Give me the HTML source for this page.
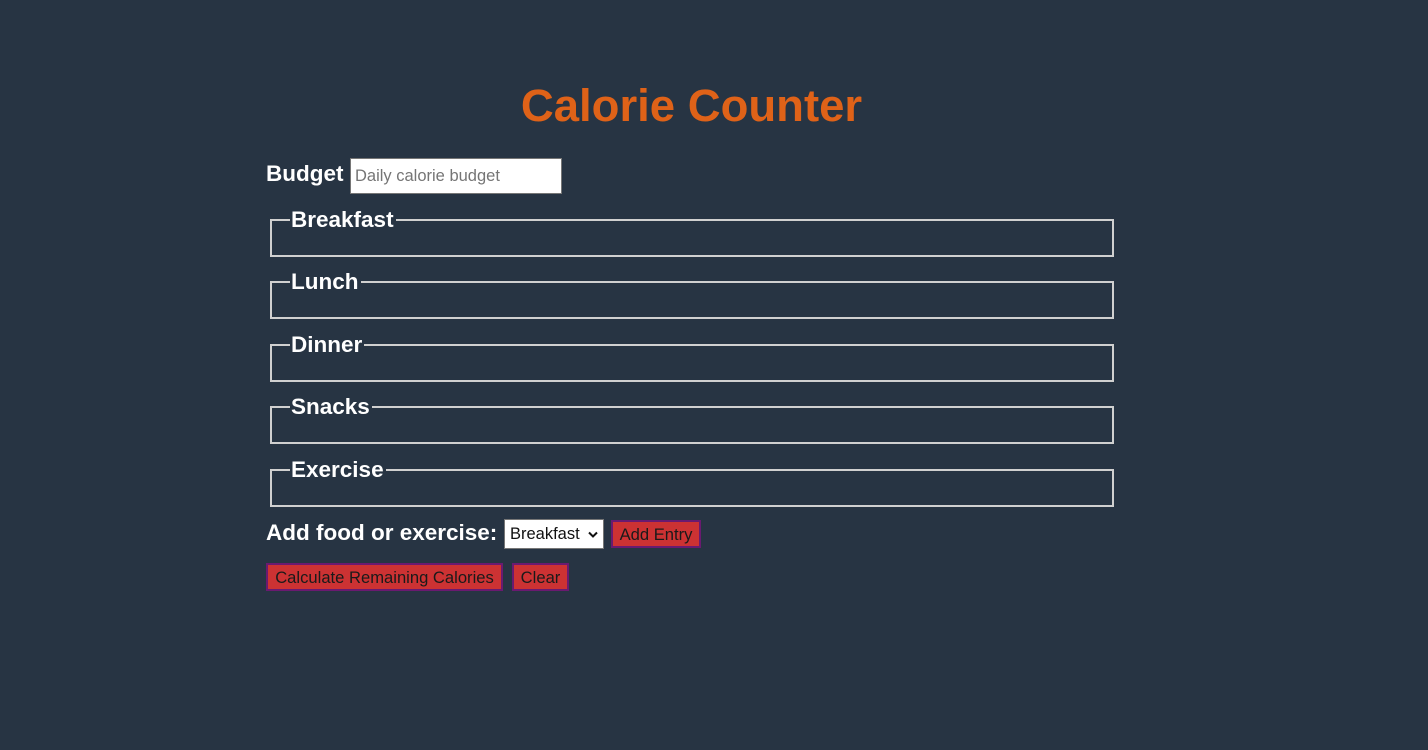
<!DOCTYPE html>
<html><head><style>
body{margin:0;width:1428px;height:750px;background:#273443;font-family:"Liberation Sans",Arial,sans-serif;color:#fff;position:relative;overflow:hidden}
.a{position:absolute}
h1{position:absolute;margin:0;left:0;width:1383px;text-align:center;top:80px;font-size:45.5px;color:#df6218;font-weight:bold;line-height:52px}
.lbl{font-size:22.5px;font-weight:bold;line-height:26px}
.fs{position:absolute;left:270px;width:840px;height:34px;border:2px solid #d0d0d0;box-sizing:content-box}
.fs span{position:absolute;left:18px;top:-14px;background:#273443;padding:0 2px 0 1px;font-size:22.5px;font-weight:bold;line-height:26px}
.btn{position:absolute;background:#cc3233;border:2px solid #6a1a70;color:#1a1a1a;font-size:16.6px;line-height:25px;box-sizing:border-box;text-align:center;height:28px;white-space:nowrap}
</style></head><body>
<h1>Calorie Counter</h1>
<div class="a lbl" style="left:266px;top:161px">Budget</div>
<div class="a" style="left:350px;top:158px;width:212px;height:36px;background:#fff;border:1px solid #767676;box-sizing:border-box;color:#757575;font-size:16.5px;line-height:34px;padding-left:4px">Daily calorie budget</div>
<div class="fs" style="top:219px"><span>Breakfast</span></div>
<div class="fs" style="top:281px"><span>Lunch</span></div>
<div class="fs" style="top:344px"><span>Dinner</span></div>
<div class="fs" style="top:406px"><span>Snacks</span></div>
<div class="fs" style="top:469px"><span>Exercise</span></div>
<div class="a lbl" style="left:266px;top:520px">Add food or exercise:</div>
<div class="a" style="left:504px;top:519px;width:100px;height:30px;background:#fff;border:1px solid #767676;box-sizing:border-box;color:#111;font-size:16.5px;line-height:28px;padding-left:5px">Breakfast<svg style="position:absolute;right:5px;top:11px" width="10" height="7" viewBox="0 0 10 7"><path d="M1 1.5L5 5.5L9 1.5" fill="none" stroke="#111" stroke-width="2"/></svg></div>
<div class="btn" style="left:611px;top:520px;width:90px">Add Entry</div>
<div class="btn" style="left:266px;top:563px;width:237px">Calculate Remaining Calories</div>
<div class="btn" style="left:512px;top:563px;width:57px">Clear</div>
</body></html>
